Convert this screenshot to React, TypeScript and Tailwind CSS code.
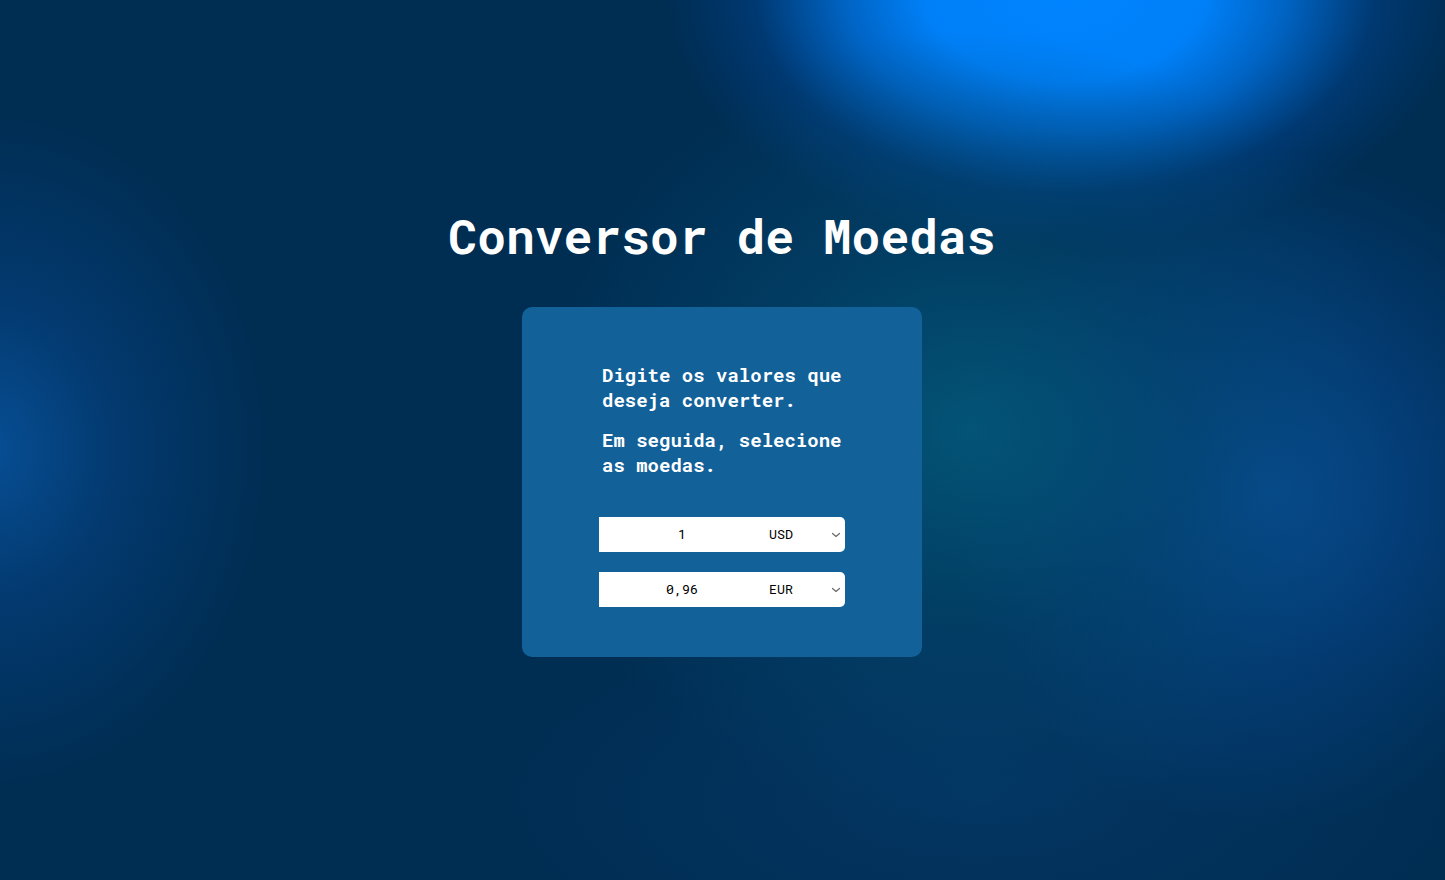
import { useState } from 'react';

const rates: Record<string, number> = { USD: 1, EUR: 0.96, BRL: 5.8, GBP: 0.8 };

function Chevron() {
  return (
    <svg
      className="pointer-events-none absolute right-[4px] top-1/2 -translate-y-1/2"
      width="10"
      height="10"
      viewBox="0 0 10 10"
      fill="none"
    >
      <path d="M1.5 3.5 L5 6.5 L8.5 3.5" stroke="#6b6b6b" strokeWidth="1.2" strokeLinecap="round" strokeLinejoin="round" />
    </svg>
  );
}

function CurrencyRow({
  value,
  onValue,
  currency,
  onCurrency,
  readOnly,
}: {
  value: string;
  onValue?: (v: string) => void;
  currency: string;
  onCurrency: (c: string) => void;
  readOnly?: boolean;
}) {
  return (
    <div className="flex h-[35px] w-[246px] rounded-r-[5px] bg-white text-black">
      <input
        value={value}
        readOnly={readOnly}
        onChange={(e) => onValue && onValue(e.target.value)}
        className="w-[166px] bg-transparent text-center font-['Roboto_Mono','DejaVu_Sans_Mono',monospace] text-[13.33px] outline-none"
      />
      <div className="relative w-[80px]">
        <select
          value={currency}
          onChange={(e) => onCurrency(e.target.value)}
          className="h-full w-full appearance-none bg-transparent pl-[4px] font-['Roboto_Mono','DejaVu_Sans_Mono',monospace] text-[13.33px] font-normal outline-none"
        >
          {Object.keys(rates).map((c) => (
            <option key={c}>{c}</option>
          ))}
        </select>
        <Chevron />
      </div>
    </div>
  );
}

export default function App() {
  const [amount, setAmount] = useState('1');
  const [from, setFrom] = useState('USD');
  const [to, setTo] = useState('EUR');

  const value = parseFloat(amount.replace(',', '.')) || 0;
  const converted = ((value / rates[from]) * rates[to]).toFixed(2).replace('.', ',');

  return (
    <div className="relative min-h-[880px] w-full overflow-hidden bg-[#002d52] font-['Roboto_Mono','DejaVu_Sans_Mono','Liberation_Mono',monospace] text-white">
      {/* background glows */}
      <div className="pointer-events-none absolute inset-0 bg-[radial-gradient(ellipse_400px_260px_at_1065px_-10px,#0084ff_0%,#0080f8_35%,#0064c4_55%,rgba(0,70,150,0.45)_78%,rgba(0,45,82,0)_100%)]" />
      <div className="pointer-events-none absolute inset-0 bg-[radial-gradient(ellipse_280px_340px_at_-10px_450px,rgba(8,84,160,0.85)_0%,rgba(6,70,140,0.5)_45%,rgba(0,45,82,0)_100%)]" />
      <div className="pointer-events-none absolute inset-0 bg-[radial-gradient(ellipse_320px_340px_at_1270px_490px,rgba(8,76,150,0.95)_0%,rgba(6,70,140,0.55)_50%,rgba(0,45,82,0)_100%)]" />
      <div className="pointer-events-none absolute inset-0 bg-[radial-gradient(ellipse_440px_400px_at_970px_430px,rgba(3,86,120,0.95)_0%,rgba(3,72,112,0.55)_50%,rgba(0,45,82,0)_100%)]" />
      <div className="pointer-events-none absolute inset-0 bg-[radial-gradient(ellipse_500px_200px_at_980px_800px,rgba(10,70,130,0.35)_0%,rgba(0,45,82,0)_100%)]" />

      <main className="relative flex flex-col items-center pt-[204px] pr-px">
        <h1 className="text-[48px] font-bold leading-[64px]">Conversor de Moedas</h1>

        <div className="mt-[39px] flex h-[350px] w-[400px] flex-col items-center rounded-[10px] bg-[#126199] pt-[55px]">
          <div className="w-[246px] pl-[3px] text-[19px] font-bold leading-[25px]">
            <p>Digite os valores que deseja converter.</p>
            <p className="mt-[15px]">Em seguida, selecione as moedas.</p>
          </div>

          <div className="mt-[40px] flex flex-col gap-[20px]">
            <CurrencyRow value={amount} onValue={setAmount} currency={from} onCurrency={setFrom} />
            <CurrencyRow value={converted} readOnly currency={to} onCurrency={setTo} />
          </div>
        </div>
      </main>
    </div>
  );
}
